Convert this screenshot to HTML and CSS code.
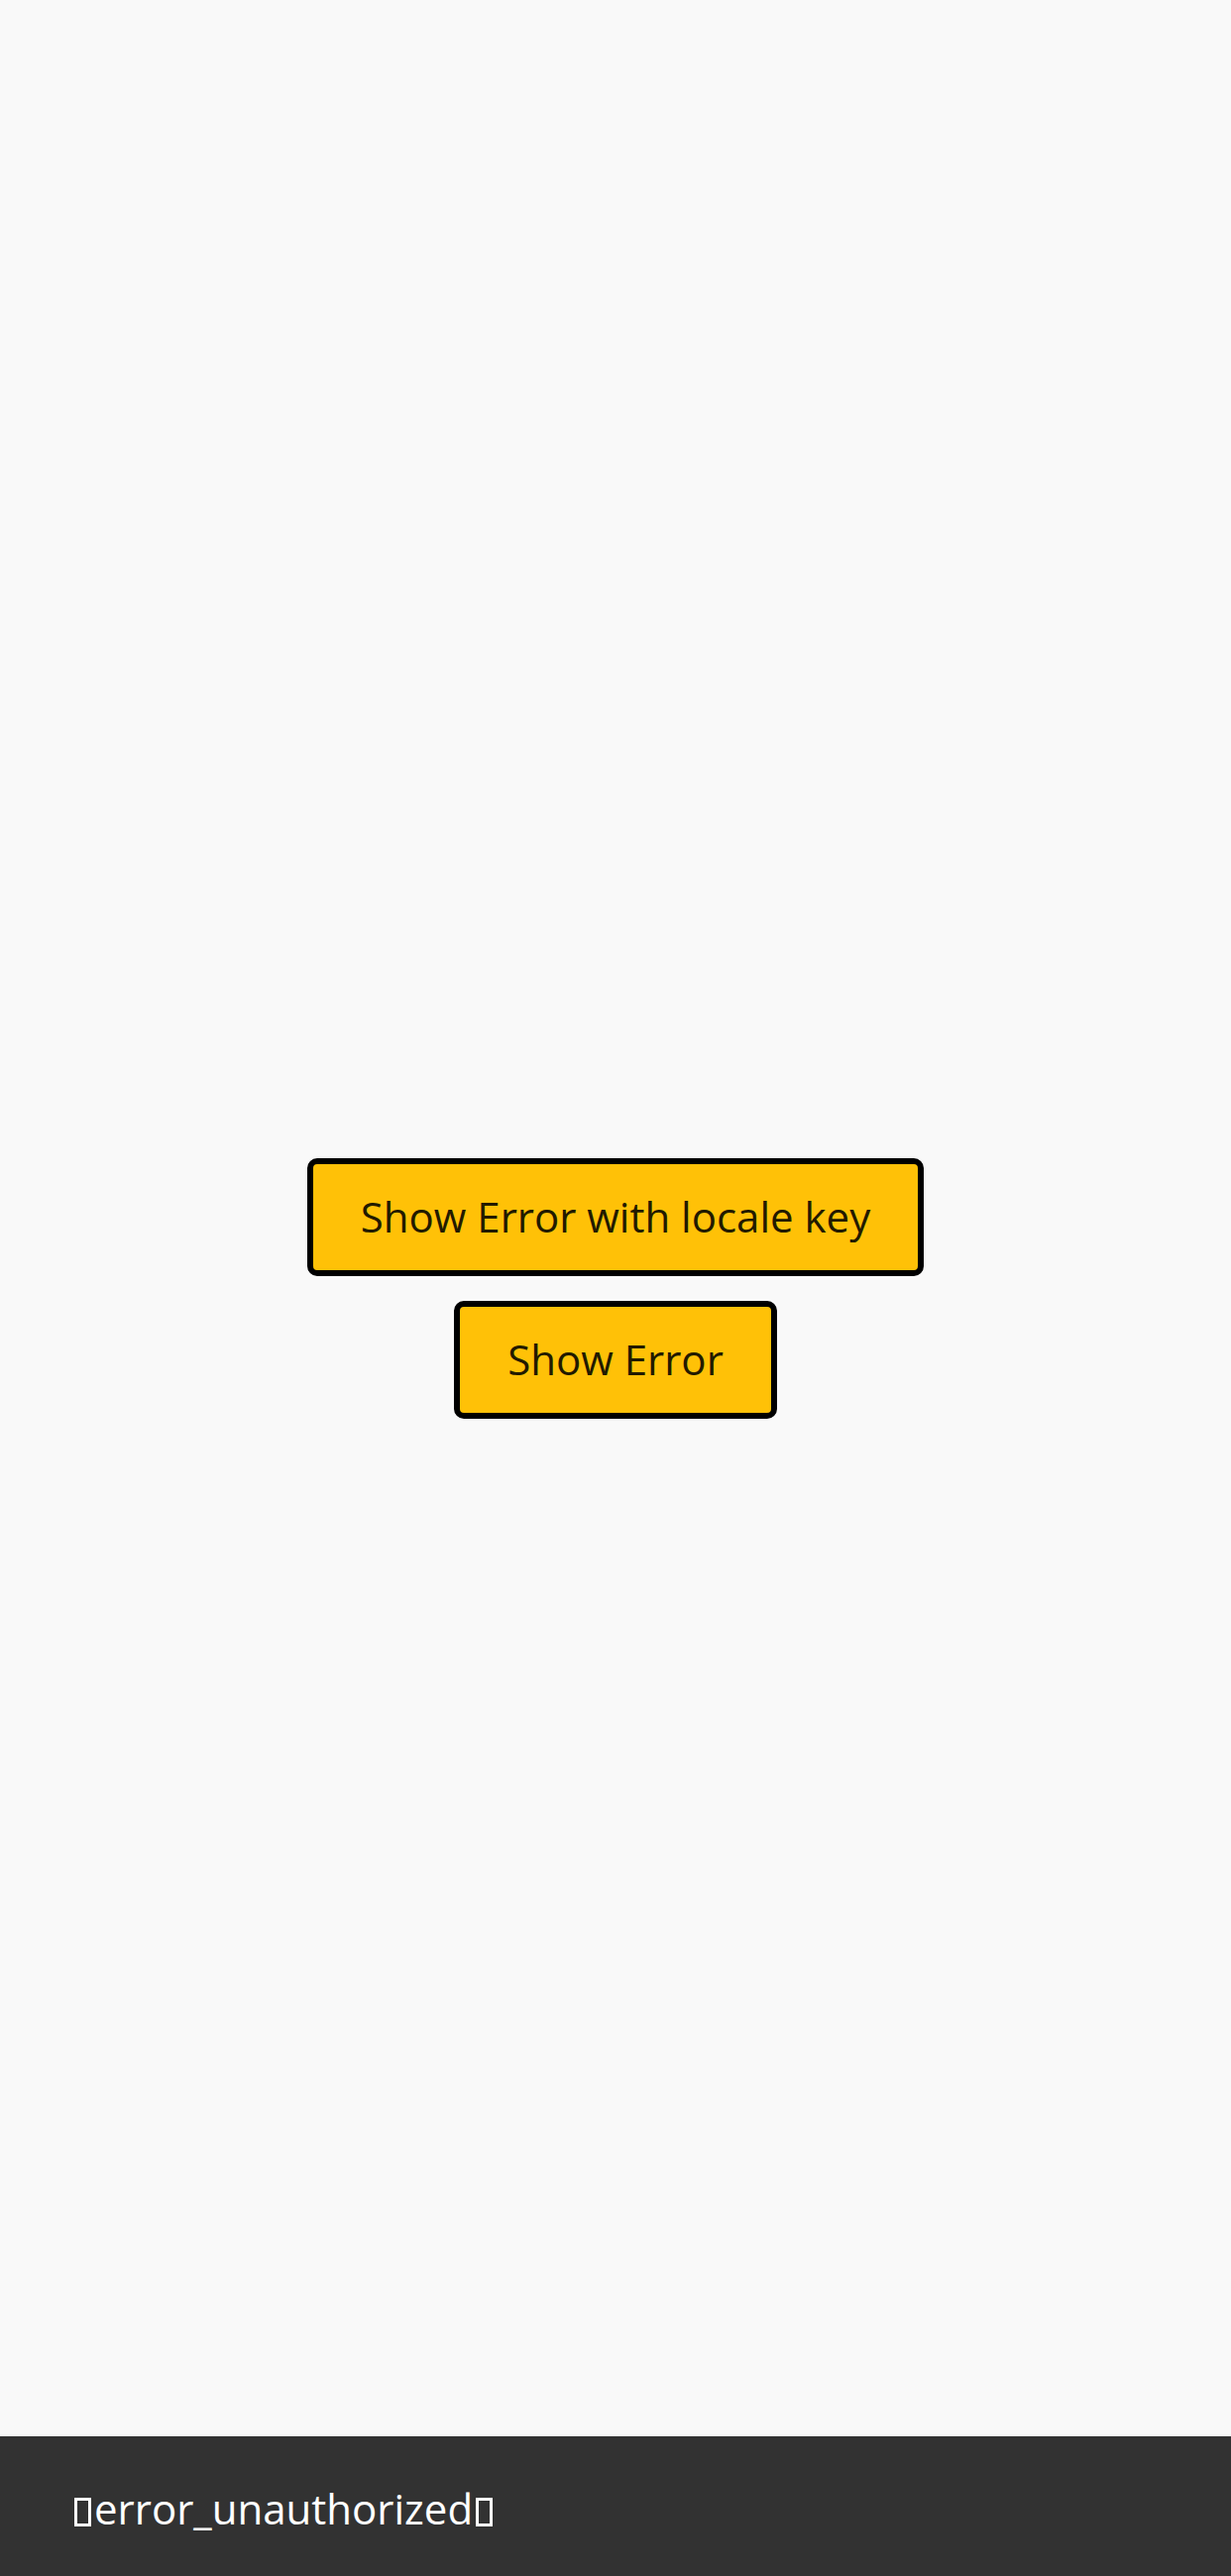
FILE: index.html
```html
<!DOCTYPE html>
<html lang="en">
<head>
<meta charset="utf-8">
<title>Show Error</title>
<link rel="stylesheet" href="styles.css">
</head>
<body>
<main class="screen">
  <div class="actions">
    <button class="btn" type="button">Show Error with locale key</button>
    <button class="btn" type="button">Show Error</button>
  </div>
</main>
<div class="snackbar">
  <span class="tofu" aria-hidden="true"></span><span class="snack-text">error_unauthorized</span><span class="tofu" aria-hidden="true"></span>
</div>
</body>
</html>
```
FILE: styles.css
```css
html, body {
  margin: 0;
  padding: 0;
}
body {
  background: #f9f9f9;
  font-family: "Open Sans", "Noto Sans", sans-serif;
  width: 1242px;
  height: 2600px;
  position: relative;
  overflow: hidden;
}
.screen {
  height: 2600px;
  display: flex;
  align-items: center;
  justify-content: center;
}
.actions {
  display: flex;
  flex-direction: column;
  align-items: center;
  gap: 25px;
}
.btn {
  box-sizing: border-box;
  height: 119px;
  padding: 0 48px;
  background: #ffc107;
  border: 6px solid #000;
  border-radius: 10px;
  font-family: "Open Sans", "Noto Sans", sans-serif;
  font-size: 42px;
  color: #221a00;
  line-height: 1;
  cursor: pointer;
}
.snackbar {
  position: absolute;
  left: 0;
  right: 0;
  bottom: 0;
  height: 141px;
  background: #323232;
  display: flex;
  align-items: center;
  padding-left: 75px;
  box-sizing: border-box;
  color: #fff;
  font-size: 42px;
}
.snack-text {
  padding: 0 3px;
  line-height: 1;
  transform: translateY(2px);
}
.tofu {
  display: inline-block;
  box-sizing: border-box;
  width: 17px;
  height: 29px;
  border: 3px solid #fff;
  transform: translateY(6px);
}
```
